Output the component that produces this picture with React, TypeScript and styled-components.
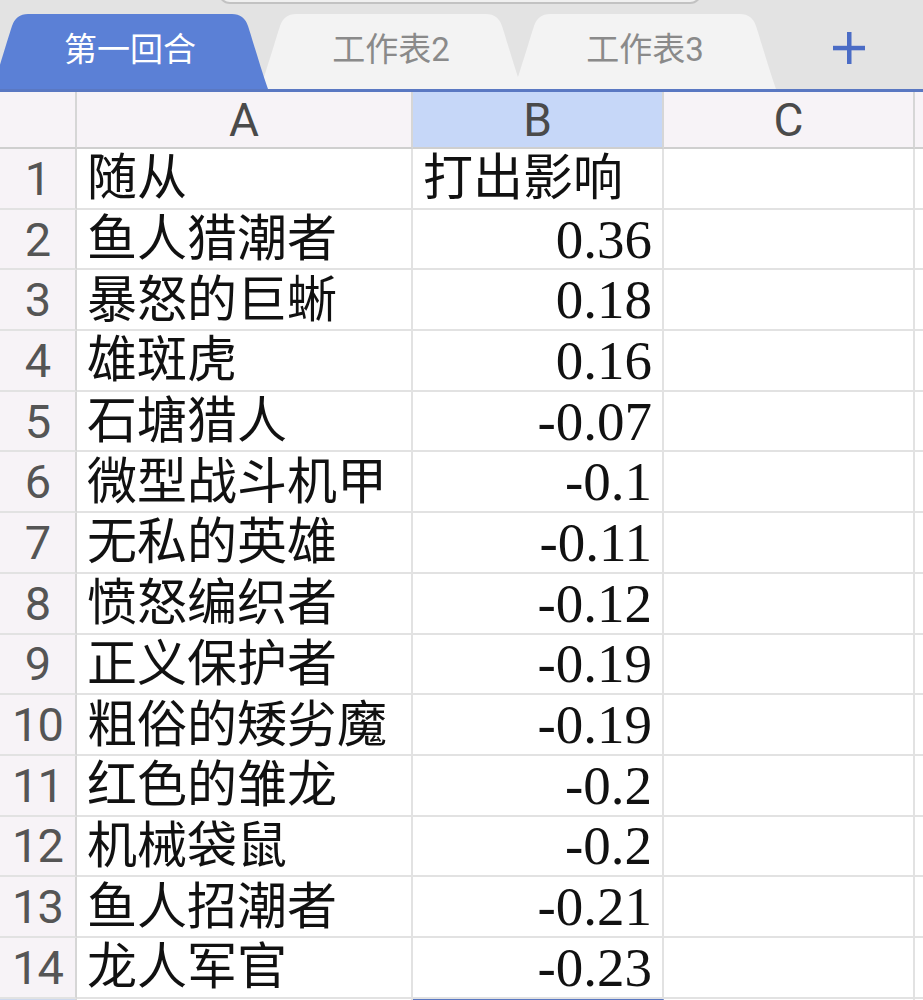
import React from "react";
import styled, { createGlobalStyle } from "styled-components";

const GlobalStyle = createGlobalStyle`
    html, body {
        margin: 0;
        padding: 0;
        background: #ffffff;
        overflow: hidden;
    }
    body {
        font-family: Roboto, "Noto Sans CJK SC", sans-serif;
    }
`;

const ACCENT = "#5b80d6";
const LINE = "#5a78c2";
const HEAD_BG = "#f7f3f7";
const SELECT_BG = "#c6d7f8";
const GRID = "#e2e2e2";
const COLUMNS = "77px 336px 251px 251px 1fr";

const Screen = styled.div`
    width: 923px;
    height: 1000px;
    overflow: hidden;
    display: flex;
    flex-direction: column;
`;

const TabBar = styled.div`
    position: relative;
    height: 75px;
    padding-top: 14px;
    background: #e3e3e3;
    display: flex;
    align-items: flex-end;
    border-bottom: 3px solid ${LINE};
`;

const Popup = styled.div`
    position: absolute;
    left: 218px;
    top: -40px;
    width: 480px;
    height: 40px;
    border: 2px solid #c2c2c2;
    border-radius: 12px;
    background: #f0f0f0;
`;

const Tab = styled.div<{ $active?: boolean; $width: number }>`
    position: relative;
    width: ${(p) => p.$width}px;
    height: 75px;
    margin-right: -8px;
    margin-left: ${(p) => (p.$active ? "-8px" : "0")};
    display: flex;
    align-items: center;
    justify-content: center;
    font-size: 33px;
    line-height: 1.2;
    color: ${(p) => (p.$active ? "#ffffff" : "#8a8a8a")};
    font-family: Roboto, "Noto Sans CJK SC", sans-serif;
    z-index: ${(p) => (p.$active ? 2 : 1)};

    svg {
        position: absolute;
        inset: 0;
    }
`;

const TabLabel = styled.span`
    position: relative;
    padding-bottom: 3px;
`;

const AddButton = styled.div`
    flex: 1;
    height: 75px;
    display: flex;
    align-items: center;
    justify-content: center;
    padding-left: 6px;
    padding-bottom: 4px;
`;

const Grid = styled.div`
    display: flex;
    flex-direction: column;
`;

const Row = styled.div<{ $height: number }>`
    display: grid;
    grid-template-columns: ${COLUMNS};
    height: ${(p) => p.$height}px;
    flex-shrink: 0;
`;

const HeadCell = styled.div<{ $selected?: boolean; $last?: boolean }>`
    background: ${(p) => (p.$selected ? SELECT_BG : HEAD_BG)};
    border-right: ${(p) => (p.$last ? "none" : "2px solid #d6d6d6")};
    border-bottom: 2px solid #cfcfcf;
    display: flex;
    align-items: center;
    justify-content: center;
    font-family: Roboto, sans-serif;
    font-size: 46px;
    line-height: 1;
    color: #4a4a4a;
    box-sizing: border-box;
`;

const RowNum = styled.div<{ $selected?: boolean }>`
    background: ${(p) => (p.$selected ? "#cdd8ee" : HEAD_BG)};
    border-right: 2px solid #d6d6d6;
    border-bottom: 2px solid ${GRID};
    display: flex;
    align-items: center;
    justify-content: center;
    font-family: Roboto, sans-serif;
    font-size: 47px;
    line-height: 1;
    color: #555555;
    box-sizing: border-box;
    letter-spacing: -1px;
`;

const Cell = styled.div<{ $numeric?: boolean; $selected?: boolean }>`
    border-right: 2px solid ${GRID};
    border-bottom: 2px solid ${GRID};
    border-top: ${(p) => (p.$selected ? `3px solid ${LINE}` : "none")};
    display: flex;
    align-items: center;
    justify-content: ${(p) => (p.$numeric ? "flex-end" : "flex-start")};
    padding: 0 10px;
    box-sizing: border-box;
    color: #111111;
    white-space: nowrap;
    font-family: "Liberation Serif", "Noto Sans CJK SC", serif;
    font-size: ${(p) => (p.$numeric ? "55px" : "50px")};
    line-height: 1;
`;

const Edge = styled.div`
    border-bottom: 2px solid ${GRID};
`;

const TabShape: React.FC<{ width: number; fill: string }> = ({ width, fill }) => {
    const w = width;
    return (
        <svg width={w} height={75} viewBox={`0 0 ${w} 75`}>
            <path
                d={`M0,75 C8,52 16,24 20,12 Q24,0 36,0 L${w - 36},0 Q${w - 24},0 ${w - 20},12 C${w - 16},24 ${w - 8},52 ${w},75 Z`}
                fill={fill}
            />
        </svg>
    );
};

const PlusIcon = () => (
    <svg width="34" height="34" viewBox="0 0 34 34">
        <rect x="15" y="1" width="4.5" height="32" fill="#4b6cc5" />
        <rect x="1" y="14.8" width="32" height="4.5" fill="#4b6cc5" />
    </svg>
);

const rows: [string, string][] = [
    ["随从", "打出影响"],
    ["鱼人猎潮者", "0.36"],
    ["暴怒的巨蜥", "0.18"],
    ["雄斑虎", "0.16"],
    ["石塘猎人", "-0.07"],
    ["微型战斗机甲", "-0.1"],
    ["无私的英雄", "-0.11"],
    ["愤怒编织者", "-0.12"],
    ["正义保护者", "-0.19"],
    ["粗俗的矮劣魔", "-0.19"],
    ["红色的雏龙", "-0.2"],
    ["机械袋鼠", "-0.2"],
    ["鱼人招潮者", "-0.21"],
    ["龙人军官", "-0.23"],
];

const tabs = [
    { name: "第一回合", width: 276, active: true },
    { name: "工作表2", width: 262 },
    { name: "工作表3", width: 262 },
];

const App: React.FC = () => {
    return (
        <Screen>
            <GlobalStyle />
            <TabBar>
                <Popup />
                {tabs.map((t) => (
                    <Tab key={t.name} $active={t.active} $width={t.width}>
                        <TabShape width={t.width} fill={t.active ? ACCENT : "#f3f3f3"} />
                        <TabLabel>{t.name}</TabLabel>
                    </Tab>
                ))}
                <AddButton>
                    <PlusIcon />
                </AddButton>
            </TabBar>
            <Grid>
                <Row $height={57}>
                    <HeadCell />
                    <HeadCell>A</HeadCell>
                    <HeadCell $selected>B</HeadCell>
                    <HeadCell>C</HeadCell>
                    <HeadCell $last />
                </Row>
                {rows.map(([name, value], i) => (
                    <Row key={i} $height={60.7}>
                        <RowNum>{i + 1}</RowNum>
                        <Cell>{name}</Cell>
                        <Cell $numeric={i > 0}>{value}</Cell>
                        <Cell />
                        <Edge />
                    </Row>
                ))}
                {/* row 15, only its top edge shows under the list */}
                <Row $height={60}>
                    <RowNum $selected />
                    <Cell />
                    <Cell $selected />
                    <Cell />
                    <Edge />
                </Row>
            </Grid>
        </Screen>
    );
};

export default App;
